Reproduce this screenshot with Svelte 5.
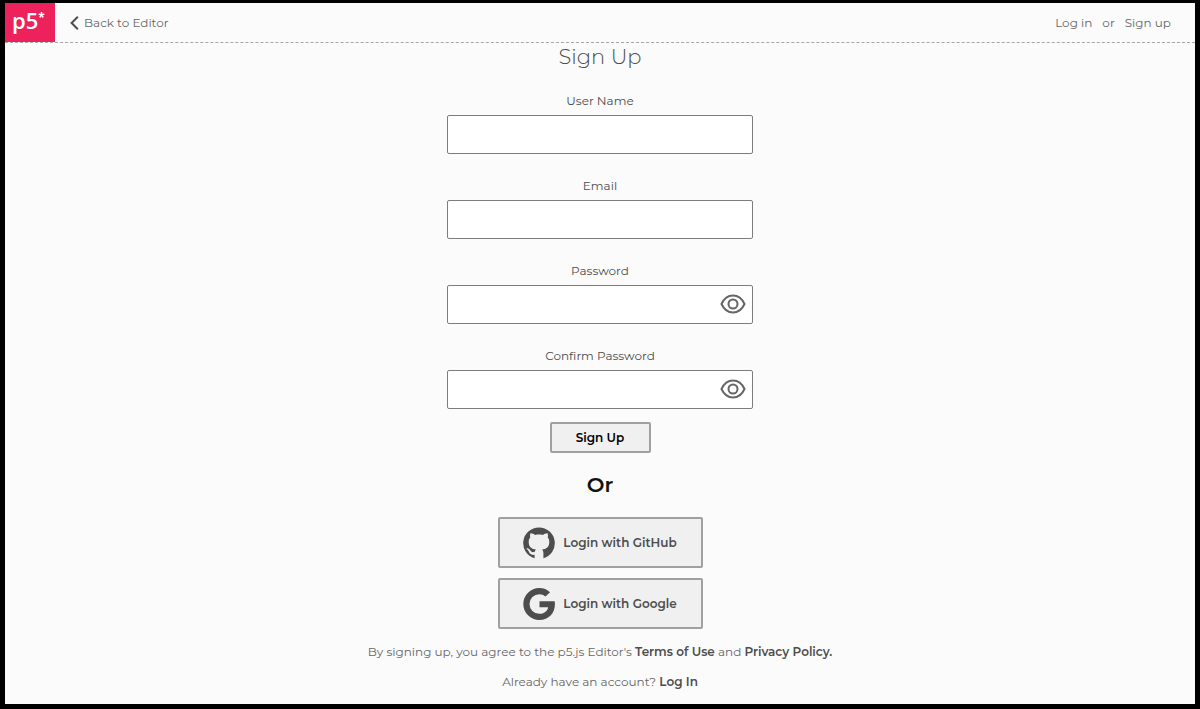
<script lang="ts">
	let username = '';
	let email = '';
	let password = '';
	let confirmPassword = '';

	let showPassword = false;
	let showConfirm = false;

	function signUp() {
		if (!username || !email || !password) {
			return;
		}

		if (password !== confirmPassword) {
			alert('Passwords must match');
		}
	}
</script>

<div class="page">
	<header>
		<a class="logo" href="/" aria-label="p5 home"><span>p5</span><sup>*</sup></a>
		<a class="back" href="/">
			<svg width="9" height="14" viewBox="0 0 9 14" aria-hidden="true">
				<path d="M7.8 0.8L1.6 7l6.2 6.2" fill="none" stroke="#4d4d4d" stroke-width="2" />
			</svg>
			Back to Editor
		</a>
		<nav>
			<a href="/login">Log in</a>
			<span>or</span>
			<a href="/signup">Sign up</a>
		</nav>
	</header>

	<main>
		<h1>Sign Up</h1>

		<form on:submit|preventDefault={signUp}>
			<div class="field">
				<label for="username">User Name</label>
				<input id="username" type="text" bind:value={username} />
			</div>
			<div class="field">
				<label for="email">Email</label>
				<input id="email" type="email" bind:value={email} />
			</div>
			<div class="field">
				<label for="password">Password</label>
				<div class="password">
					<input
						id="password"
						type={showPassword ? 'text' : 'password'}
						value={password}
						on:input={(e) => (password = e.currentTarget.value)}
					/>
					<button
						type="button"
						class="eye"
						aria-label="Show password"
						on:click={() => (showPassword = !showPassword)}
					>
						<svg width="26" height="20" viewBox="0 0 26 20" fill="none" stroke="#666" stroke-width="2">
							<path d="M1.5 10C4 4.5 8 1.5 13 1.5S22 4.5 24.5 10C22 15.5 18 18.5 13 18.5S4 15.5 1.5 10z" />
							<circle cx="13" cy="10" r="4.5" />
						</svg>
					</button>
				</div>
			</div>
			<div class="field">
				<label for="confirm">Confirm Password</label>
				<div class="password">
					<input
						id="confirm"
						type={showConfirm ? 'text' : 'password'}
						value={confirmPassword}
						on:input={(e) => (confirmPassword = e.currentTarget.value)}
					/>
					<button
						type="button"
						class="eye"
						aria-label="Show confirm password"
						on:click={() => (showConfirm = !showConfirm)}
					>
						<svg width="26" height="20" viewBox="0 0 26 20" fill="none" stroke="#666" stroke-width="2">
							<path d="M1.5 10C4 4.5 8 1.5 13 1.5S22 4.5 24.5 10C22 15.5 18 18.5 13 18.5S4 15.5 1.5 10z" />
							<circle cx="13" cy="10" r="4.5" />
						</svg>
					</button>
				</div>
			</div>
			<button class="submit" type="submit">Sign Up</button>
		</form>

		<h2>Or</h2>

		<div class="social">
			<button type="button">
				<svg width="32" height="32" viewBox="0 0 32 32" fill="#4d4d4d" aria-hidden="true">
					<path
						d="M16 .5A15.7 15.7 0 0 0 11.6 31.3V27.8C7.8 28.4 6.600 26.600 5.800 24.600C5.300 23.400 4.600 22.600 3.700 22C3.200 21.500 3.600 21.200 4.300 21.200C5.800 21.300 6.600 22.400 7.400 23.500C8.600 25.400 10.200 25.400 11.800 24.700C12 23.600 12.500 22.900 13 22.500C8.700 22 5.700 20.300 5.700 14.700C5.700 12.800 6.300 11.600 7.300 10.500C6.900 9.300 6.900 7.800 7.500 6.200C9.200 6.100 10.700 6.900 12.100 7.900C14.600 7.300 17.400 7.300 19.900 7.900C21.300 6.900 22.800 6.100 24.500 6.200C25.100 7.800 25.100 9.300 24.700 10.500C25.700 11.600 26.300 12.800 26.300 14.700C26.300 20.300 23.300 22 19 22.500C19.800 23.200 20.400 24.400 20.400 26V31.300A15.700 15.700 0 0 0 16 .5z"
					/>
				</svg>
				Login with GitHub
			</button>
			<button type="button">
				<svg width="32" height="32" viewBox="0 0 31 31" fill="#4d4d4d" aria-hidden="true">
					<path
						d="M16 12.8H30.7C32.2 22.8 26 31 15.8 31A15.5 15.5 0 1 1 15.8 0C20 0 23.5 1.5 26.2 4L21.8 8.3A9.3 9.3 0 0 0 15.8 6A9.5 9.5 0 0 0 15.8 25C20.5 25 23.6 22.5 24.4 18.6H16z"
					/>
				</svg>
				Login with Google
			</button>
		</div>

		<p>
			By signing up, you agree to the p5.js Editor's <a href="/terms">Terms of Use</a> and
			<a href="/privacy">Privacy Policy.</a>
		</p>
		<p>Already have an account? <a href="/login">Log In</a></p>
	</main>
</div>

<style>
	:global(body) {
		background: #000;
	}

	.page {
		box-sizing: border-box;
		min-height: 100vh;
		border: solid #000;
		border-width: 3px 5px 5px;
		background: #fbfbfb;
		color: #4d4d4d;
		font-family: Montserrat, Inter, sans-serif;
		font-size: 12px;
		line-height: 16px;
	}

	a {
		color: inherit;
		text-decoration: none;
	}

	button,
	input {
		box-sizing: border-box;
		font-family: inherit;
		color: inherit;
	}

	header {
		display: flex;
		align-items: center;
		height: 39px;
		border-bottom: 1px dashed #a6a6a6;
		color: #666;
	}

	.logo {
		box-sizing: border-box;
		display: flex;
		width: 50px;
		height: 39px;
		padding: 3px 0 0 7px;
		background: #ed225d;
		color: #fff;
		font-family: 'Open Sans', sans-serif;
		font-size: 22px;
		font-weight: 600;
		line-height: 28px;
	}

	.logo sup {
		font-size: 12px;
		font-weight: 700;
		line-height: 24px;
	}

	.back {
		display: flex;
		align-items: center;
		gap: 5px;
		margin-left: 15px;
	}

	nav {
		display: flex;
		gap: 10px;
		margin-left: auto;
		padding-right: 24px;
	}

	main {
		display: flex;
		flex-direction: column;
		align-items: center;
	}

	h1 {
		margin: 0 0 22px;
		font-size: 21px;
		font-weight: 300;
		line-height: 28px;
	}

	form {
		display: flex;
		flex-direction: column;
		align-items: center;
		width: 100%;
	}

	.field {
		width: 306px;
		max-width: 100%;
		margin-bottom: 24px;
	}

	.field:nth-child(4) {
		margin-bottom: 13px;
	}

	label {
		display: block;
		margin-bottom: 6px;
		text-align: center;
	}

	input {
		display: block;
		width: 100%;
		height: 39px;
		padding: 8px 12px;
		border: 1px solid #7d7d7d;
		border-radius: 2px;
		background: #fff;
		font-size: 14px;
	}

	.password {
		position: relative;
	}

	.eye {
		position: absolute;
		top: 9px;
		right: 7px;
		padding: 0;
		border: 0;
		background: none;
		cursor: pointer;
	}

	.eye svg {
		display: block;
	}

	.submit,
	.social button {
		border: 2px solid #a0a0a0;
		border-radius: 2px;
		background: #f0f0f0;
		font-size: 12px;
		font-weight: 600;
		cursor: pointer;
	}

	.submit {
		width: 101px;
		height: 31px;
		padding: 0;
		color: #000;
	}

	h2 {
		margin: 18px 0;
		color: #111;
		font-size: 21px;
		font-weight: 600;
		line-height: 28px;
	}

	.social {
		display: flex;
		flex-direction: column;
		gap: 10px;
		margin-bottom: 15px;
	}

	.social button {
		display: flex;
		align-items: center;
		justify-content: center;
		gap: 8px;
		width: 205px;
		height: 51px;
		padding: 0;
	}

	p {
		margin: 0 0 14px;
		color: #666;
		text-align: center;
	}

	p a {
		color: #4d4d4d;
		font-weight: 600;
	}
</style>
